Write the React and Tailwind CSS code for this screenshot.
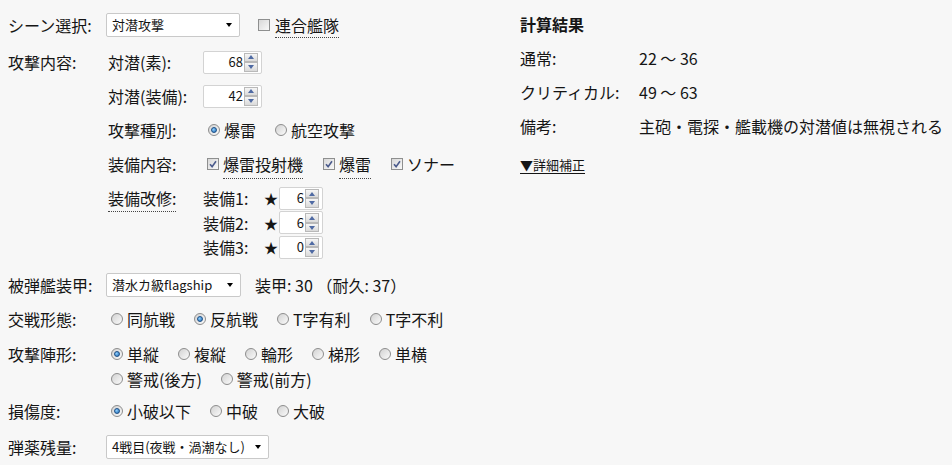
const Radio = ({ label, checked }) => (
    <label className="flex items-center mr-[14px]">
        <span className="ml-[5px] mr-[4px] w-[12px] h-[12px] rounded-full border border-[#8d8d8d] bg-linear-to-br from-[#d2d2d2] to-[#fbfbfb] flex items-center justify-center">
            {checked && (
                <span className="w-[6px] h-[6px] rounded-full border border-[#1d4f86] bg-[radial-gradient(circle_at_35%_35%,#8fd0ff,#1f6bb5)]" />
            )}
        </span>
        <span>{label}</span>
    </label>
);

const Check = ({ checked }) => (
    <span className="w-[12px] h-[12px] border border-[#8e8f8f] bg-linear-to-br from-[#d8d8d8] to-[#f9f9f9] flex items-center justify-center">
        {checked && (
            <svg width="8" height="8" viewBox="0 0 8 8">
                <path d="M1 4.2 L3.1 6.6 L7 1.2" fill="none" stroke="#4b5b8c" strokeWidth="1.6" />
            </svg>
        )}
    </span>
);

const SpinBtn = ({ up }) => (
    <div className="flex-1 border border-[#b9b9b9] bg-linear-to-b from-[#f6f6f6] to-[#dadada] flex items-center justify-center">
        {up ? (
            <span className="w-0 h-0 border-x-[3px] border-x-transparent border-b-[4px] border-b-[#4f6aa3]" />
        ) : (
            <span className="w-0 h-0 border-x-[3px] border-x-transparent border-t-[4px] border-t-[#4f6aa3]" />
        )}
    </div>
);

const Spin = ({ value, w }) => (
    <div className={`${w} h-[23px] bg-white border border-[#d3d3d3] rounded-[2px] flex items-center justify-end pr-[3px]`}>
        <span className="text-[13px] leading-[16px] mr-[1px]">{value}</span>
        <div className="flex flex-col w-[14px] h-[19px]">
            <SpinBtn up />
            <SpinBtn />
        </div>
    </div>
);

const Select = ({ w, children }) => (
    <div className={`${w} h-[24px] bg-white border border-[#c9c9c9] rounded-[2px] flex items-center justify-between pl-[5px] pr-[7px] text-[13px] leading-[16px] shrink-0`}>
        <span>{children}</span>
        <span className="w-0 h-0 border-x-[3.5px] border-x-transparent border-t-[4px] border-t-black" />
    </div>
);

const Dotted = ({ children }) => (
    <span className="border-b border-dotted border-[#444] pb-[3px] -mb-[4px]">{children}</span>
);

const App = () => {
    return (
        <div className="min-h-screen w-full bg-[#f7f7f7] flex text-[16px] leading-[20px] text-[#151515] font-['Noto_Sans_CJK_JP','Noto_Sans',sans-serif]">
            {/* left: inputs */}
            <div className="w-[520px] shrink-0 pl-[8px] pt-[12px] flex flex-col">
                <div className="flex items-center h-[26px]">
                    <div className="w-[98px]">シーン選択:</div>
                    <Select w="w-[134px]">対潜攻撃</Select>
                    <label className="flex items-center ml-[18px]">
                        <Check />
                        <span className="ml-[5px] border-b border-dotted border-[#444] pb-[2px] -mb-[3px]">連合艦隊</span>
                    </label>
                </div>

                <div className="flex mt-[7px]">
                    <div className="w-[100px] h-[34px] flex items-center">攻撃内容:</div>
                    <div className="flex flex-col">
                        <div className="flex items-center h-[34px]">
                            <div className="w-[95px]">対潜(素):</div>
                            <Spin value={68} w="w-[59px]" />
                        </div>
                        <div className="flex items-center h-[34px]">
                            <div className="w-[95px]">対潜(装備):</div>
                            <Spin value={42} w="w-[59px]" />
                        </div>
                        <div className="flex items-center h-[34px]">
                            <div className="w-[95px]">攻撃種別:</div>
                            <Radio label="爆雷" checked />
                            <Radio label="航空攻撃" />
                        </div>
                        <div className="flex items-center h-[34px]">
                            <div className="w-[95px]">装備内容:</div>
                            <label className="flex items-center ml-[4px] mr-[16px]">
                                <Check checked />
                                <span className="ml-[4px] border-b border-dotted border-[#444] pb-[4px] -mb-[5px]">爆雷投射機</span>
                            </label>
                            <label className="flex items-center ml-[4px] mr-[16px]">
                                <Check checked />
                                <span className="ml-[4px] border-b border-dotted border-[#444] pb-[4px] -mb-[5px]">爆雷</span>
                            </label>
                            <label className="flex items-center ml-[4px]">
                                <Check checked />
                                <span className="ml-[4px]">ソナー</span>
                            </label>
                        </div>
                        <div className="flex pt-[5px]">
                            <div className="w-[95px] h-[24px] flex items-center">
                                <Dotted>装備改修:</Dotted>
                            </div>
                            <div className="flex flex-col">
                                {[6, 6, 0].map((v, i) => (
                                    <div key={i} className="flex items-center h-[24.5px]">
                                        <span className="w-[61px]">装備{i + 1}:</span>
                                        <span className="w-[15px] text-[14px]">★</span>
                                        <Spin value={v} w="w-[44px]" />
                                    </div>
                                ))}
                            </div>
                        </div>
                    </div>
                </div>

                <div className="flex items-center h-[34px] mt-[8.5px]">
                    <div className="w-[98px]">被弾艦装甲:</div>
                    <Select w="w-[135px]">潜水カ級flagship</Select>
                    <span className="ml-[14px]">装甲: 30 （耐久: 37）</span>
                </div>
                <div className="flex items-center h-[34px]">
                    <div className="w-[98px]">交戦形態:</div>
                    <Radio label="同航戦" />
                    <Radio label="反航戦" checked />
                    <Radio label="T字有利" />
                    <Radio label="T字不利" />
                </div>
                <div className="flex pt-[5px] pb-[3px]">
                    <div className="w-[98px] h-[25px] flex items-center">攻撃陣形:</div>
                    <div className="flex flex-col">
                        <div className="flex items-center h-[25px]">
                            <Radio label="単縦" checked />
                            <Radio label="複縦" />
                            <Radio label="輪形" />
                            <Radio label="梯形" />
                            <Radio label="単横" />
                        </div>
                        <div className="flex items-center h-[25px]">
                            <Radio label="警戒(後方)" />
                            <Radio label="警戒(前方)" />
                        </div>
                    </div>
                </div>
                <div className="flex items-center h-[34px]">
                    <div className="w-[98px]">損傷度:</div>
                    <Radio label="小破以下" checked />
                    <Radio label="中破" />
                    <Radio label="大破" />
                </div>
                <div className="flex items-center h-[34px] mt-[2px]">
                    <div className="w-[98px]">弾薬残量:</div>
                    <Select w="w-[163px]">4戦目(夜戦・渦潮なし)</Select>
                </div>
            </div>

            {/* right: results */}
            <div className="pt-[7px] flex flex-col">
                <div className="h-[34px] flex items-center font-bold">計算結果</div>
                <div className="h-[34px] flex items-center">
                    <span className="w-[119px]">通常:</span>
                    <span>22 ～ 36</span>
                </div>
                <div className="h-[34px] flex items-center">
                    <span className="w-[119px]">クリティカル:</span>
                    <span>49 ～ 63</span>
                </div>
                <div className="h-[34px] flex items-center">
                    <span className="w-[119px]">備考:</span>
                    <span>主砲・電探・艦載機の対潜値は無視される</span>
                </div>
                <div className="h-[44px] flex items-center text-[13px]">
                    <span className="underline underline-offset-[3px]">▼詳細補正</span>
                </div>
            </div>
        </div>
    );
};

export default App;
